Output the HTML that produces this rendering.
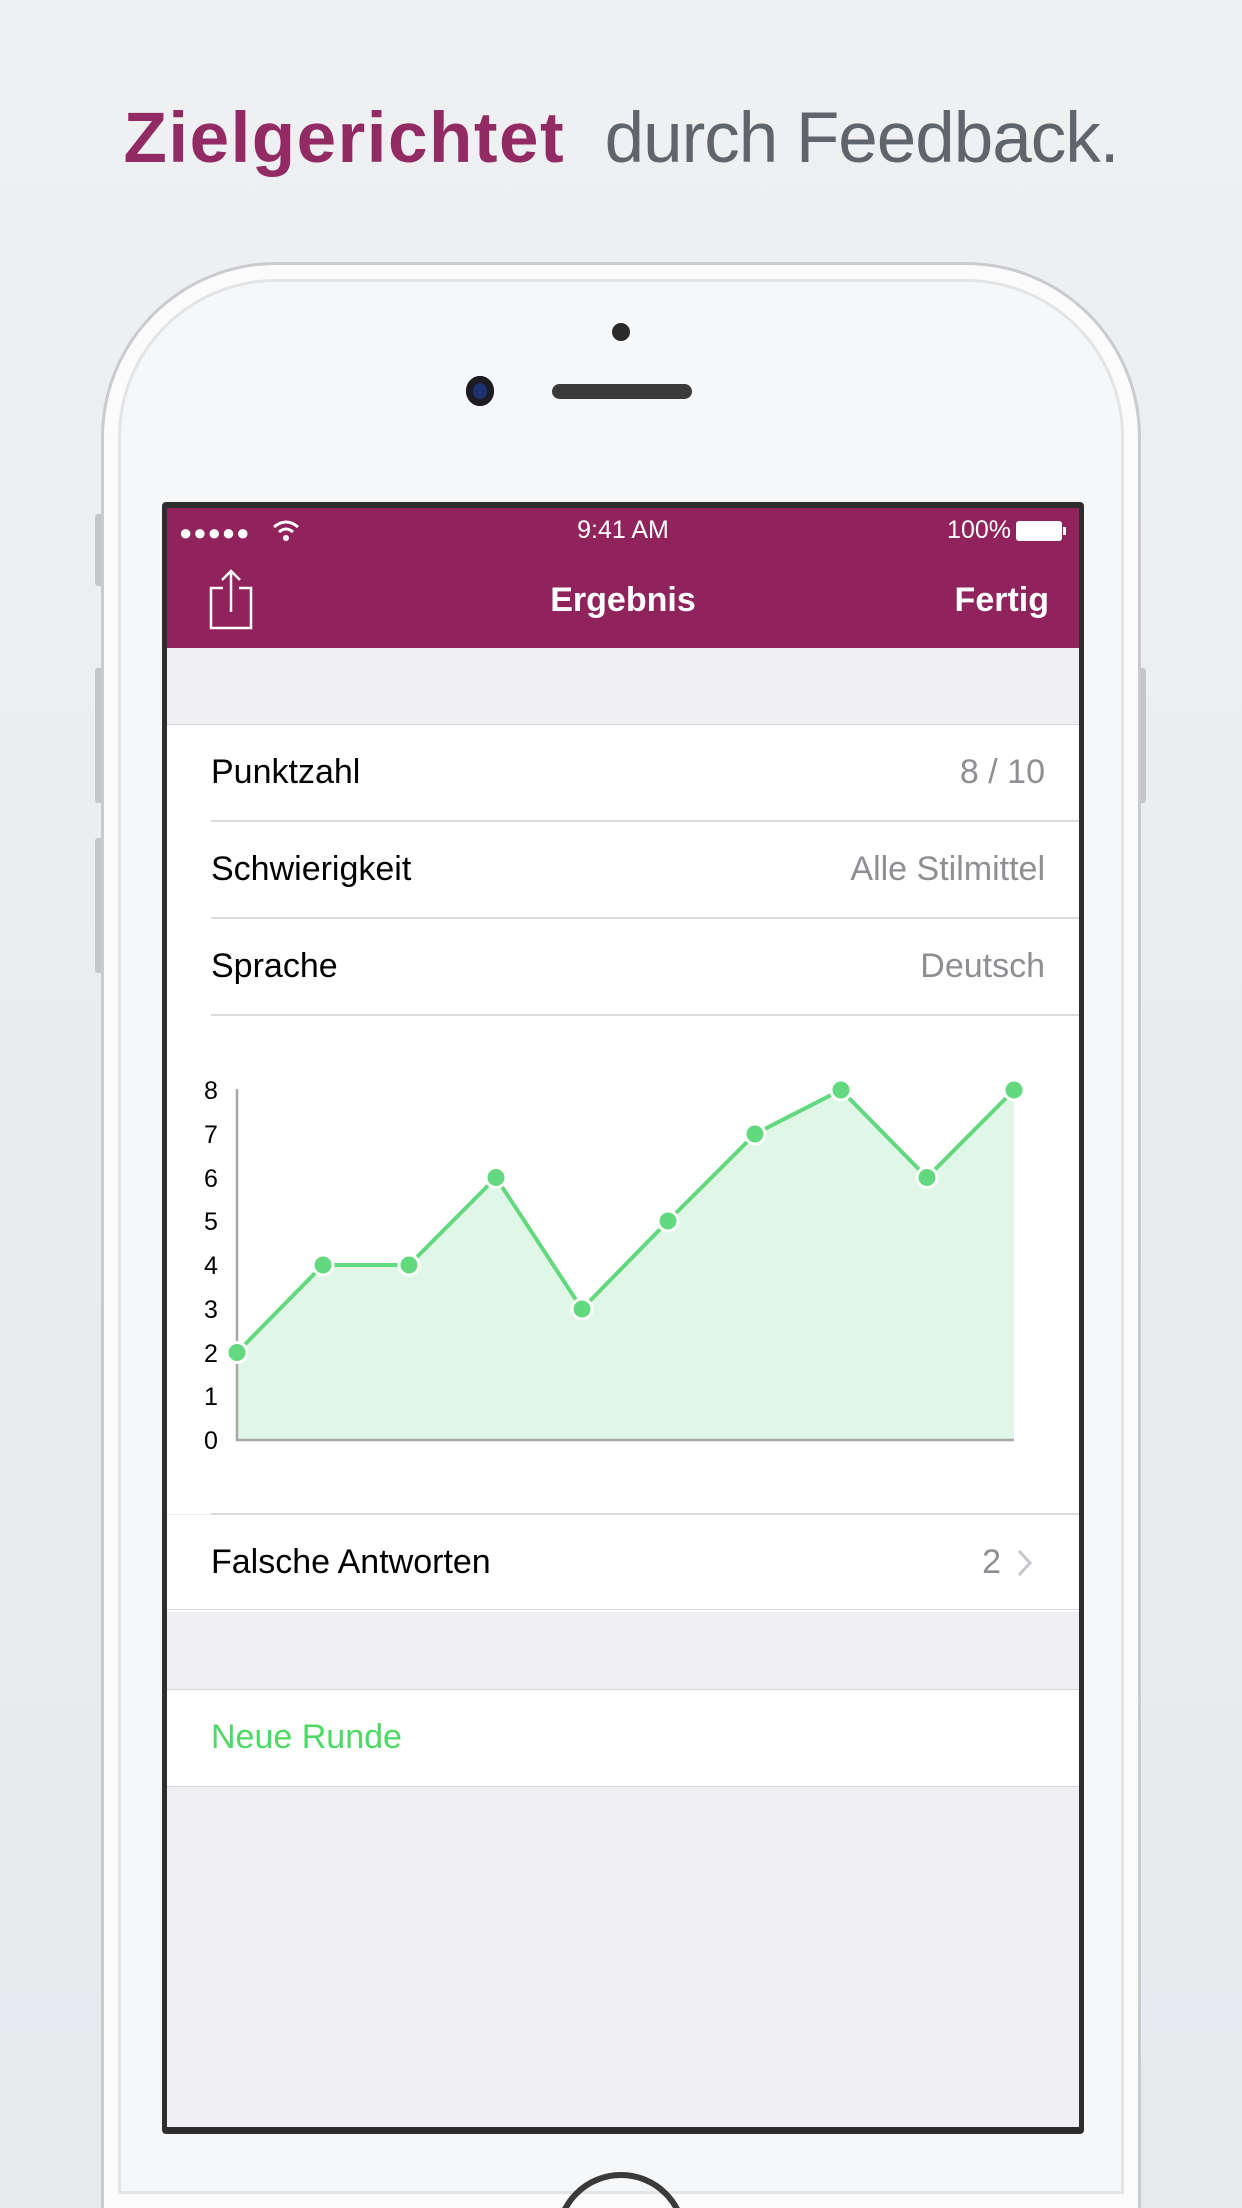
<!DOCTYPE html>
<html style="width:1242px;height:2208px;overflow:hidden;background:#eaedf0"><head><meta charset="utf-8"><style>
*{margin:0;padding:0;box-sizing:border-box}
body{width:1242px;height:2208px;overflow:hidden;font-family:"Liberation Sans",sans-serif;position:relative}
#wrap{position:absolute;left:0;top:0;width:1242px;height:2208px;overflow:hidden;background:linear-gradient(#eef0f2,#e6eaed)}
.abs{position:absolute}
.title{left:0;width:1242px;top:98px;text-align:center;font-size:71px;white-space:nowrap}
.phone{left:101px;top:262px;width:1040px;height:1946px;border-radius:175px 175px 0 0;background:#f6f7f9;border:3px solid #c9cbce;border-bottom:none;box-shadow:inset 0 0 0 14px #fbfbfc, inset 0 0 0 17px #e2e4e6}
.btn{background:#c4c6c9;width:8px;border-radius:3px;left:95px}
.screen{left:162px;top:502px;width:922px;height:1632px;background:#2e2e2e;border-radius:4px}
.inner{left:167px;top:508px;width:912px;height:1619px;background:#efeff4;overflow:hidden}
.row{position:absolute;left:0;width:912px;height:97px;background:#fff;font-size:34px;color:#000}
.row .l{position:absolute;left:44px;top:28px}
.row .r{position:absolute;right:34px;top:28px;color:#8e8e93}
.sep{position:absolute;left:44px;right:0;height:2px;background:#dcdce0}
</style></head><body><div id="wrap">
<div class="abs title"><span style="color:#922a63;font-weight:bold;letter-spacing:1.5px">Zielgerichtet</span>&nbsp; <span style="color:#60656b;letter-spacing:-1px">durch Feedback.</span></div>

<div class="abs btn" style="top:514px;height:72px"></div>
<div class="abs btn" style="top:668px;height:135px"></div>
<div class="abs btn" style="top:838px;height:135px"></div>
<div class="abs" style="left:1138px;top:668px;width:8px;height:135px;background:#c4c6c9;border-radius:3px"></div>
<div class="abs phone"></div>
<div class="abs" style="left:612px;top:323px;width:18px;height:18px;border-radius:50%;background:#2a2a2a"></div>
<div class="abs" style="left:466px;top:376px;width:28px;height:30px;border-radius:50%;background:#1c1c22;box-shadow:inset 0 0 0 7px #1c1c22, inset 0 0 0 14px #1d3270"></div>
<div class="abs" style="left:552px;top:384px;width:140px;height:15px;border-radius:8px;background:#3a3a3a"></div>
<div class="abs" style="left:545px;top:2160px;width:152px;height:48px;overflow:hidden"><div style="position:absolute;left:10px;top:12px;width:132px;height:132px;border-radius:50%;border:6px solid #3a3a3a"></div></div>

<div class="abs screen"></div>
<div class="abs inner">
  <div style="position:absolute;left:0;top:0;width:912px;height:140px;background:#91235c"></div>
  <div style="position:absolute;left:12px;top:12px;color:#fff;font-size:22px;letter-spacing:1px">●●●●●</div>
  <svg style="position:absolute;left:104px;top:10px" width="30" height="26" viewBox="0 0 30 26"><path d="M3 9 Q15 -1 27 9" stroke="#fff" stroke-width="3" fill="none"/><path d="M8 14 Q15 8 22 14" stroke="#fff" stroke-width="3" fill="none"/><circle cx="15" cy="20" r="3" fill="#fff"/></svg>
  <div style="position:absolute;left:0;width:912px;top:8px;text-align:center;color:#fff;font-size:25px">9:41 AM</div>
  <div style="position:absolute;right:68px;top:8px;color:#fff;font-size:25px">100%</div>
  <div style="position:absolute;right:17px;top:13px;width:46px;height:20px;background:#fff;border-radius:3px"></div>
  <div style="position:absolute;right:13px;top:19px;width:3px;height:8px;background:#fff"></div>
  <svg style="position:absolute;left:40px;top:60px" width="48" height="62" viewBox="0 0 48 62"><path d="M16 20 H4 V60 H44 V20 H32" stroke="#fff" stroke-width="2.5" fill="none"/><path d="M24 44 V3 M15 12 L24 3 L33 12" stroke="#fff" stroke-width="2.5" fill="none"/></svg>
  <div style="position:absolute;left:0;width:912px;top:73px;text-align:center;color:#fff;font-size:34px;font-weight:bold">Ergebnis</div>
  <div style="position:absolute;right:30px;top:73px;color:#fff;font-size:34px;font-weight:bold">Fertig</div>

  <div style="position:absolute;left:0;top:216px;width:912px;height:1px;background:#d8d8dc"></div>
  <div class="row" style="top:217px"><span class="l">Punktzahl</span><span class="r">8 / 10</span></div>
  <div class="sep" style="top:312px"></div>
  <div class="row" style="top:314px"><span class="l">Schwierigkeit</span><span class="r">Alle Stilmittel</span></div>
  <div class="sep" style="top:409px"></div>
  <div class="row" style="top:411px"><span class="l">Sprache</span><span class="r">Deutsch</span></div>
  <div class="sep" style="top:506px"></div>
  <div style="position:absolute;left:0;top:508px;width:912px;height:498px;background:#fff">
    <svg width="912" height="498" style="position:absolute;left:0;top:0">
      <g transform="translate(-167,-1016)">
        <g font-family="Liberation Sans" font-size="25" fill="#000" text-anchor="middle">
          <text x="211" y="1099">8</text><text x="211" y="1143">7</text><text x="211" y="1187">6</text><text x="211" y="1230">5</text><text x="211" y="1274">4</text><text x="211" y="1318">3</text><text x="211" y="1362">2</text><text x="211" y="1405">1</text><text x="211" y="1449">0</text>
        </g>
        <polygon points="237,1352.5 323,1265 409,1265 496,1177.5 582,1309 668,1221 755,1134 841,1090 927,1177.5 1014,1090 1014,1440 237,1440" fill="#e0f6e6"/>
        <path d="M237 1089 V1440 H1014" stroke="#a8a8a8" stroke-width="2.5" fill="none"/>
        <polyline points="237,1352.5 323,1265 409,1265 496,1177.5 582,1309 668,1221 755,1134 841,1090 927,1177.5 1014,1090" fill="none" stroke="#62d97f" stroke-width="4"/>
        <g fill="#62d97f" stroke="#fff" stroke-width="3">
          <circle cx="237" cy="1352.5" r="10"/><circle cx="323" cy="1265" r="10"/><circle cx="409" cy="1265" r="10"/><circle cx="496" cy="1177.5" r="10"/><circle cx="582" cy="1309" r="10"/><circle cx="668" cy="1221" r="10"/><circle cx="755" cy="1134" r="10"/><circle cx="841" cy="1090" r="10"/><circle cx="927" cy="1177.5" r="10"/><circle cx="1014" cy="1090" r="10"/>
        </g>
      </g>
    </svg>
  </div>
  <div class="sep" style="top:1005px"></div>
  <div class="row" style="top:1007px"><span class="l">Falsche Antworten</span><span class="r" style="right:78px">2</span></div>
  <svg style="position:absolute;left:848px;top:1040px" width="20" height="30" viewBox="0 0 20 30"><path d="M4 3 L15 15 L4 27" stroke="#c7c7cc" stroke-width="3" fill="none"/></svg>
  <div style="position:absolute;left:0;top:1101px;width:912px;height:1px;background:#d8d8dc"></div>
  <div style="position:absolute;left:0;top:1181px;width:912px;height:1px;background:#d8d8dc"></div>
  <div class="row" style="top:1182px"><span class="l" style="color:#4cd964">Neue Runde</span></div>
  <div style="position:absolute;left:0;top:1278px;width:912px;height:1px;background:#d8d8dc"></div>
</div>
</div></body></html>
